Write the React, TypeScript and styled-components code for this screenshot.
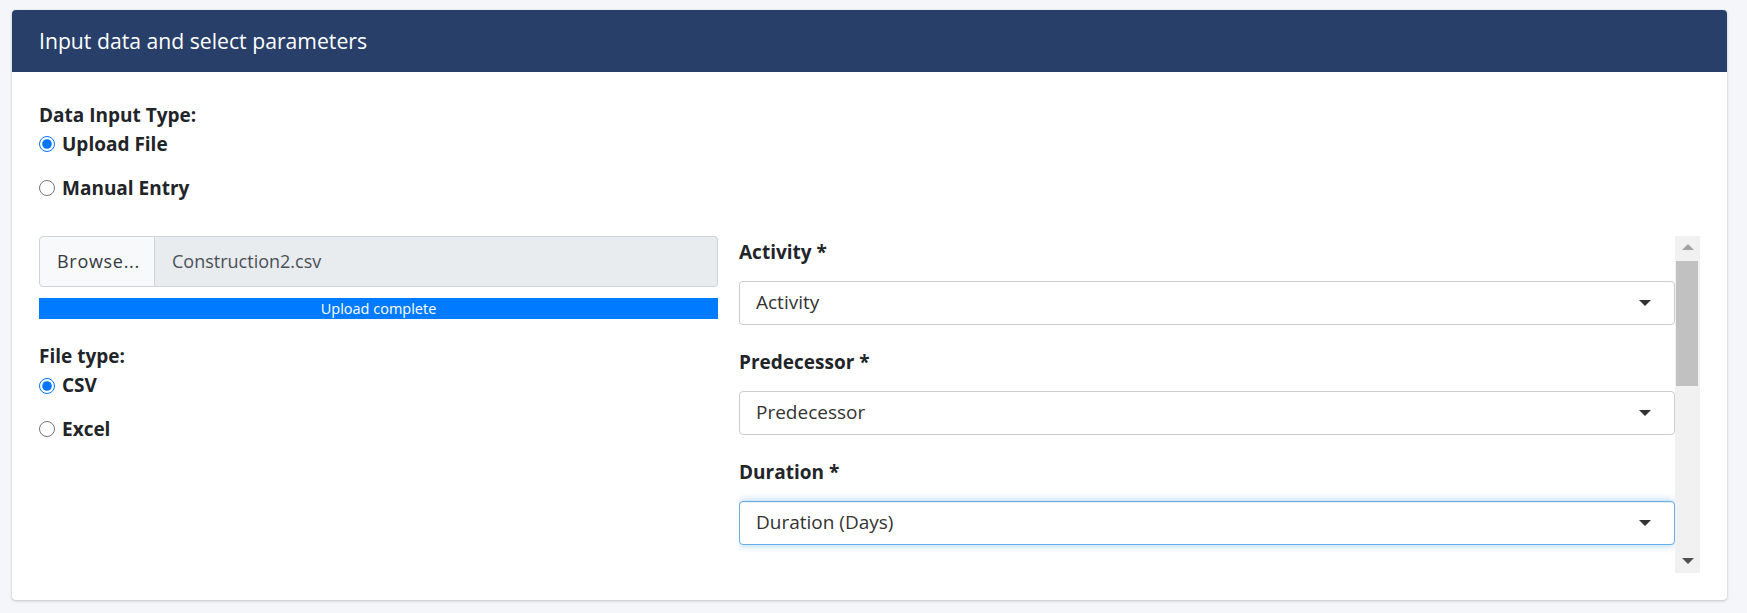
import React from 'react'
import styled, { createGlobalStyle } from 'styled-components'

const FONT = `"Open Sans", "Noto Sans", Lato, sans-serif`

const GlobalStyle = createGlobalStyle`
  html, body {
    margin: 0;
    padding: 0;
    background: #f4f6f9;
  }
  body {
    font-family: ${FONT};
    font-size: 19px;
    line-height: 28.8px;
    color: #212529;
  }
  * {
    box-sizing: border-box;
  }
`

type Field = { label: string; value: string; focused?: boolean }

const fields: Field[] = [
  { label: 'Activity *', value: 'Activity' },
  { label: 'Predecessor *', value: 'Predecessor' },
  { label: 'Duration *', value: 'Duration (Days)', focused: true },
]

export default function App() {
  return (
    <Page>
      <GlobalStyle />
      <Card>
        <CardHeader>
          <CardTitle>Input data and select parameters</CardTitle>
        </CardHeader>
        <CardBody>
          <RadioGroup>
            <ControlLabel>Data Input Type:</ControlLabel>
            <RadioRow>
              <RadioInput type="radio" name="input-type" defaultChecked />
              <span>Upload File</span>
            </RadioRow>
            <RadioRow>
              <RadioInput type="radio" name="input-type" />
              <span>Manual Entry</span>
            </RadioRow>
          </RadioGroup>

          <Columns>
            <LeftColumn>
              <FileInput>
                <BrowseButton>Browse...</BrowseButton>
                <FileName>Construction2.csv</FileName>
              </FileInput>
              <Progress>Upload complete</Progress>

              <RadioGroup>
                <ControlLabel>File type:</ControlLabel>
                <RadioRow>
                  <RadioInput type="radio" name="file-type" defaultChecked />
                  <span>CSV</span>
                </RadioRow>
                <RadioRow>
                  <RadioInput type="radio" name="file-type" />
                  <span>Excel</span>
                </RadioRow>
              </RadioGroup>
            </LeftColumn>

            <ScrollPane>
              <Viewport>
                {fields.map((f) => (
                  <SelectGroup key={f.label}>
                    <ControlLabel>{f.label}</ControlLabel>
                    <SelectBox $focused={f.focused}>
                      <span>{f.value}</span>
                      <Caret />
                    </SelectBox>
                  </SelectGroup>
                ))}
              </Viewport>
              <ScrollTrack>
                <ScrollButton>
                  <Arrow $dir="up" />
                </ScrollButton>
                <ScrollThumb />
                <ScrollButton>
                  <Arrow $dir="down" />
                </ScrollButton>
              </ScrollTrack>
            </ScrollPane>
          </Columns>
        </CardBody>
      </Card>
    </Page>
  )
}

/* ================= STYLES ================= */

const Page = styled.div`
  padding: 10px 20px 12px 12px;
`

const Card = styled.div`
  background: #ffffff;
  border-radius: 4px;
  box-shadow: 0 0 1px rgba(0, 0, 0, 0.125), 0 1px 3px rgba(0, 0, 0, 0.2);
`

const CardHeader = styled.div`
  height: 62px;
  display: flex;
  align-items: center;
  padding: 0 27px 0;
  background: #283f6a;
  border-radius: 4px 4px 0 0;
`

const CardTitle = styled.h3`
  margin: 0;
  font-size: 21.2px;
  font-weight: 400;
  color: #ffffff;
`

const CardBody = styled.div`
  padding: 29px 27px 27px;
`

const ControlLabel = styled.label`
  display: block;
  font-weight: 700;
  color: #212529;
`

const RadioGroup = styled.div`
  display: flex;
  flex-direction: column;
  gap: 15px;

  & > ${ControlLabel} {
    margin-bottom: -15px;
  }
`

const RadioRow = styled.label`
  display: flex;
  align-items: center;
  gap: 7px;
  font-weight: 700;
  color: #212529;
`

const RadioInput = styled.input`
  width: 16px;
  height: 16px;
  margin: 0;
`

const Columns = styled.div`
  display: grid;
  grid-template-columns: 679px 1fr;
  gap: 21px;
  margin-top: 34px;
  align-items: start;
`

const LeftColumn = styled.div`
  display: flex;
  flex-direction: column;
`

const FileInput = styled.div`
  display: flex;
  height: 51px;
  font-size: 18px;
`

const BrowseButton = styled.div`
  width: 116px;
  display: flex;
  align-items: center;
  padding-left: 17px;
  background: #f8f9fa;
  border: 1px solid #ced4da;
  border-radius: 4px 0 0 4px;
  color: #343a40;
  letter-spacing: 0.7px;
`

const FileName = styled.div`
  flex: 1;
  display: flex;
  align-items: center;
  padding-left: 17px;
  background: #e9ecef;
  border: 1px solid #ced4da;
  border-left: none;
  border-radius: 0 4px 4px 0;
  color: #495057;
`

const Progress = styled.div`
  margin-top: 11px;
  margin-bottom: 23px;
  height: 21px;
  background: #007bff;
  color: #ffffff;
  font-size: 14.5px;
  line-height: 21px;
  text-align: center;
`

const ScrollPane = styled.div`
  height: 337px;
  display: flex;
`

const Viewport = styled.div`
  flex: 1;
  overflow: hidden;
  padding-top: 2px;
`

const ScrollTrack = styled.div`
  width: 25px;
  display: flex;
  flex-direction: column;
  background: #f1f1f1;
`

const ScrollButton = styled.div`
  height: 25px;
  display: flex;
  justify-content: center;
  align-items: center;
`

const Arrow = styled.span<{ $dir: 'up' | 'down' }>`
  width: 0;
  height: 0;
  margin-left: 1px;
  border-left: 6px solid transparent;
  border-right: 6px solid transparent;
  ${(p) =>
    p.$dir === 'up'
      ? 'border-bottom: 6px solid #a3a3a3; margin-bottom: 3px;'
      : 'border-top: 6px solid #505050;'}
`

const ScrollThumb = styled.div`
  height: 125px;
  margin: 0 2px auto 1px;
  background: #c1c1c1;
`

const SelectGroup = styled.div`
  margin-bottom: 23.6px;

  & > ${ControlLabel} {
    margin-bottom: 13.6px;
  }
`

const SelectBox = styled.div<{ $focused?: boolean }>`
  height: 44px;
  display: flex;
  align-items: center;
  justify-content: space-between;
  padding: 0 23px 0 16px;
  background: #ffffff;
  border: 1px solid ${(p) => (p.$focused ? '#66afe9' : '#cccccc')};
  border-radius: 4px;
  color: #333333;
  box-shadow: ${(p) =>
    p.$focused
      ? 'inset 0 1px 1px rgba(0, 0, 0, 0.075), 0 0 8px rgba(102, 175, 233, 0.6)'
      : 'none'};
`

const Caret = styled.span`
  width: 0;
  height: 0;
  border-left: 6px solid transparent;
  border-right: 6px solid transparent;
  border-top: 6px solid #333333;
`
